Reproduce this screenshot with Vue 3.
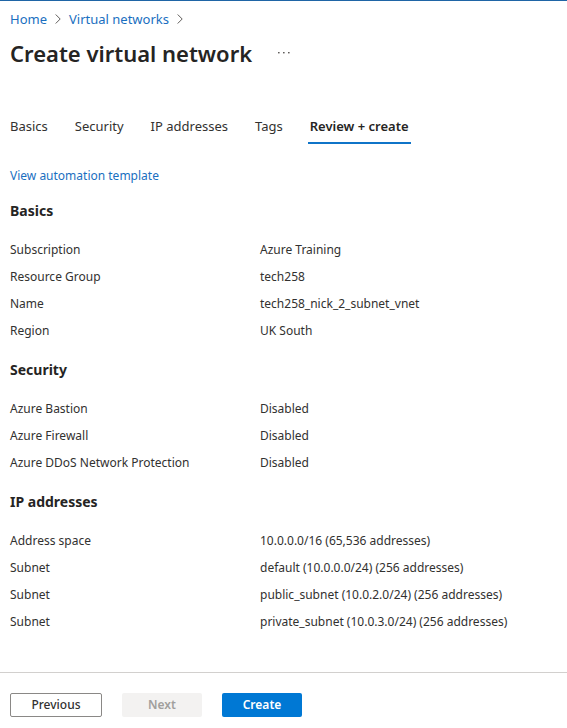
<script setup>
import { ref } from 'vue'

const crumbs = ['Home', 'Virtual networks']
const tabs = ['Basics', 'Security', 'IP addresses', 'Tags', 'Review + create']
const activeTab = ref('Review + create')

const sections = [
  {
    title: 'Basics',
    rows: [
      ['Subscription', 'Azure Training'],
      ['Resource Group', 'tech258'],
      ['Name', 'tech258_nick_2_subnet_vnet'],
      ['Region', 'UK South'],
    ],
  },
  {
    title: 'Security',
    rows: [
      ['Azure Bastion', 'Disabled'],
      ['Azure Firewall', 'Disabled'],
      ['Azure DDoS Network Protection', 'Disabled'],
    ],
  },
  {
    title: 'IP addresses',
    rows: [
      ['Address space', '10.0.0.0/16 (65,536 addresses)'],
      ['Subnet', 'default (10.0.0.0/24) (256 addresses)'],
      ['Subnet', 'public_subnet (10.0.2.0/24) (256 addresses)'],
      ['Subnet', 'private_subnet (10.0.3.0/24) (256 addresses)'],
    ],
  },
]
</script>

<template>
  <div class="page">
    <header class="header">
      <nav class="crumbs" aria-label="Breadcrumb">
        <template v-for="crumb in crumbs" :key="crumb">
          <a href="#">{{ crumb }}</a>
          <svg class="chevron" viewBox="0 0 6 10" aria-hidden="true">
            <path d="M0.7 0.5 L5.2 5 L0.7 9.5" />
          </svg>
        </template>
      </nav>
      <div class="title-row">
        <h1>Create virtual network</h1>
        <button class="more" type="button" aria-label="More actions">
          <svg viewBox="0 0 12 2" aria-hidden="true">
            <rect x="0" y="0" width="1.6" height="1.4" />
            <rect x="5" y="0" width="1.6" height="1.4" />
            <rect x="10" y="0" width="1.6" height="1.4" />
          </svg>
        </button>
      </div>
    </header>

    <div class="tabs" role="tablist">
      <button
        v-for="tab in tabs"
        :key="tab"
        type="button"
        role="tab"
        class="tab"
        :class="{ active: tab === activeTab }"
        :aria-selected="tab === activeTab"
        @click="activeTab = tab"
      >
        {{ tab }}
      </button>
    </div>

    <main class="content">
      <a class="template-link" href="#">View automation template</a>
      <section v-for="section in sections" :key="section.title" class="section">
        <h2>{{ section.title }}</h2>
        <dl>
          <div v-for="(row, i) in section.rows" :key="i" class="row">
            <dt>{{ row[0] }}</dt>
            <dd>{{ row[1] }}</dd>
          </div>
        </dl>
      </section>
    </main>

    <footer class="footer">
      <button class="btn previous" type="button">Previous</button>
      <button class="btn next" type="button" disabled>Next</button>
      <button class="btn create" type="button">Create</button>
    </footer>
  </div>
</template>

<style>
body {
  margin: 0;
  background: #fff;
}
</style>

<style scoped>
.page {
  box-sizing: border-box;
  min-height: 100vh;
  display: flex;
  flex-direction: column;
  border-top: 1px solid #1f65a6;
  color: #323130;
  font: 13px/18px "Segoe UI", "Noto Sans", "Open Sans", sans-serif;
}

a {
  color: #1a6fbf;
  text-decoration: none;
}

a:hover {
  text-decoration: underline;
}

button {
  font: inherit;
  color: inherit;
  cursor: pointer;
}

.header {
  padding: 9px 10px 0;
}

.crumbs {
  display: flex;
  align-items: center;
  gap: 8px;
}

.chevron {
  width: 6px;
  height: 10px;
  fill: none;
  stroke: #605e5c;
  stroke-width: 1;
}

.title-row {
  display: flex;
  align-items: center;
  gap: 20px;
  margin-top: 9px;
}

h1 {
  margin: 0;
  color: #252423;
  font-size: 22px;
  line-height: 32px;
  font-weight: 600;
}

.more {
  display: flex;
  padding: 6px;
  border: 0;
  background: none;
}

.more svg {
  width: 12px;
  height: 2px;
  fill: #605e5c;
}

.tabs {
  display: flex;
  gap: 23px;
  margin-top: 44px;
  padding: 0 8px;
}

.tab {
  padding: 4px 2px 7px;
  border: 0;
  border-bottom: 2px solid transparent;
  background: none;
  white-space: nowrap;
}

.tab.active {
  border-bottom-color: #0f74c8;
  color: #252423;
  font-weight: 600;
}

.content {
  flex: 1;
  padding: 23px 10px 24px;
  font-size: 12px;
}

.template-link {
  display: block;
  width: fit-content;
}

.section {
  margin-top: 14px;
}

h2 {
  margin: 0 0 13px;
  color: #252423;
  font-size: 14px;
  line-height: 24px;
  font-weight: 700;
}

dl,
dd {
  margin: 0;
}

.row {
  display: grid;
  grid-template-columns: 250px 1fr;
  line-height: 27px;
}

.footer {
  display: flex;
  gap: 20px;
  padding: 20px 10px 11px;
  border-top: 1px solid #d2d0ce;
}

.btn {
  box-sizing: border-box;
  min-width: 80px;
  height: 24px;
  padding: 0 8px;
  border: 1px solid transparent;
  border-radius: 2px;
  font-size: 12px;
  font-weight: 600;
  line-height: 22px;
}

.previous {
  min-width: 92px;
  border-color: #8a8886;
  background: #fff;
  font-weight: 500;
}

.next {
  background: #f3f2f1;
  color: #a19f9d;
  cursor: default;
}

.create {
  background: #0078d4;
  color: #fff;
}
</style>
